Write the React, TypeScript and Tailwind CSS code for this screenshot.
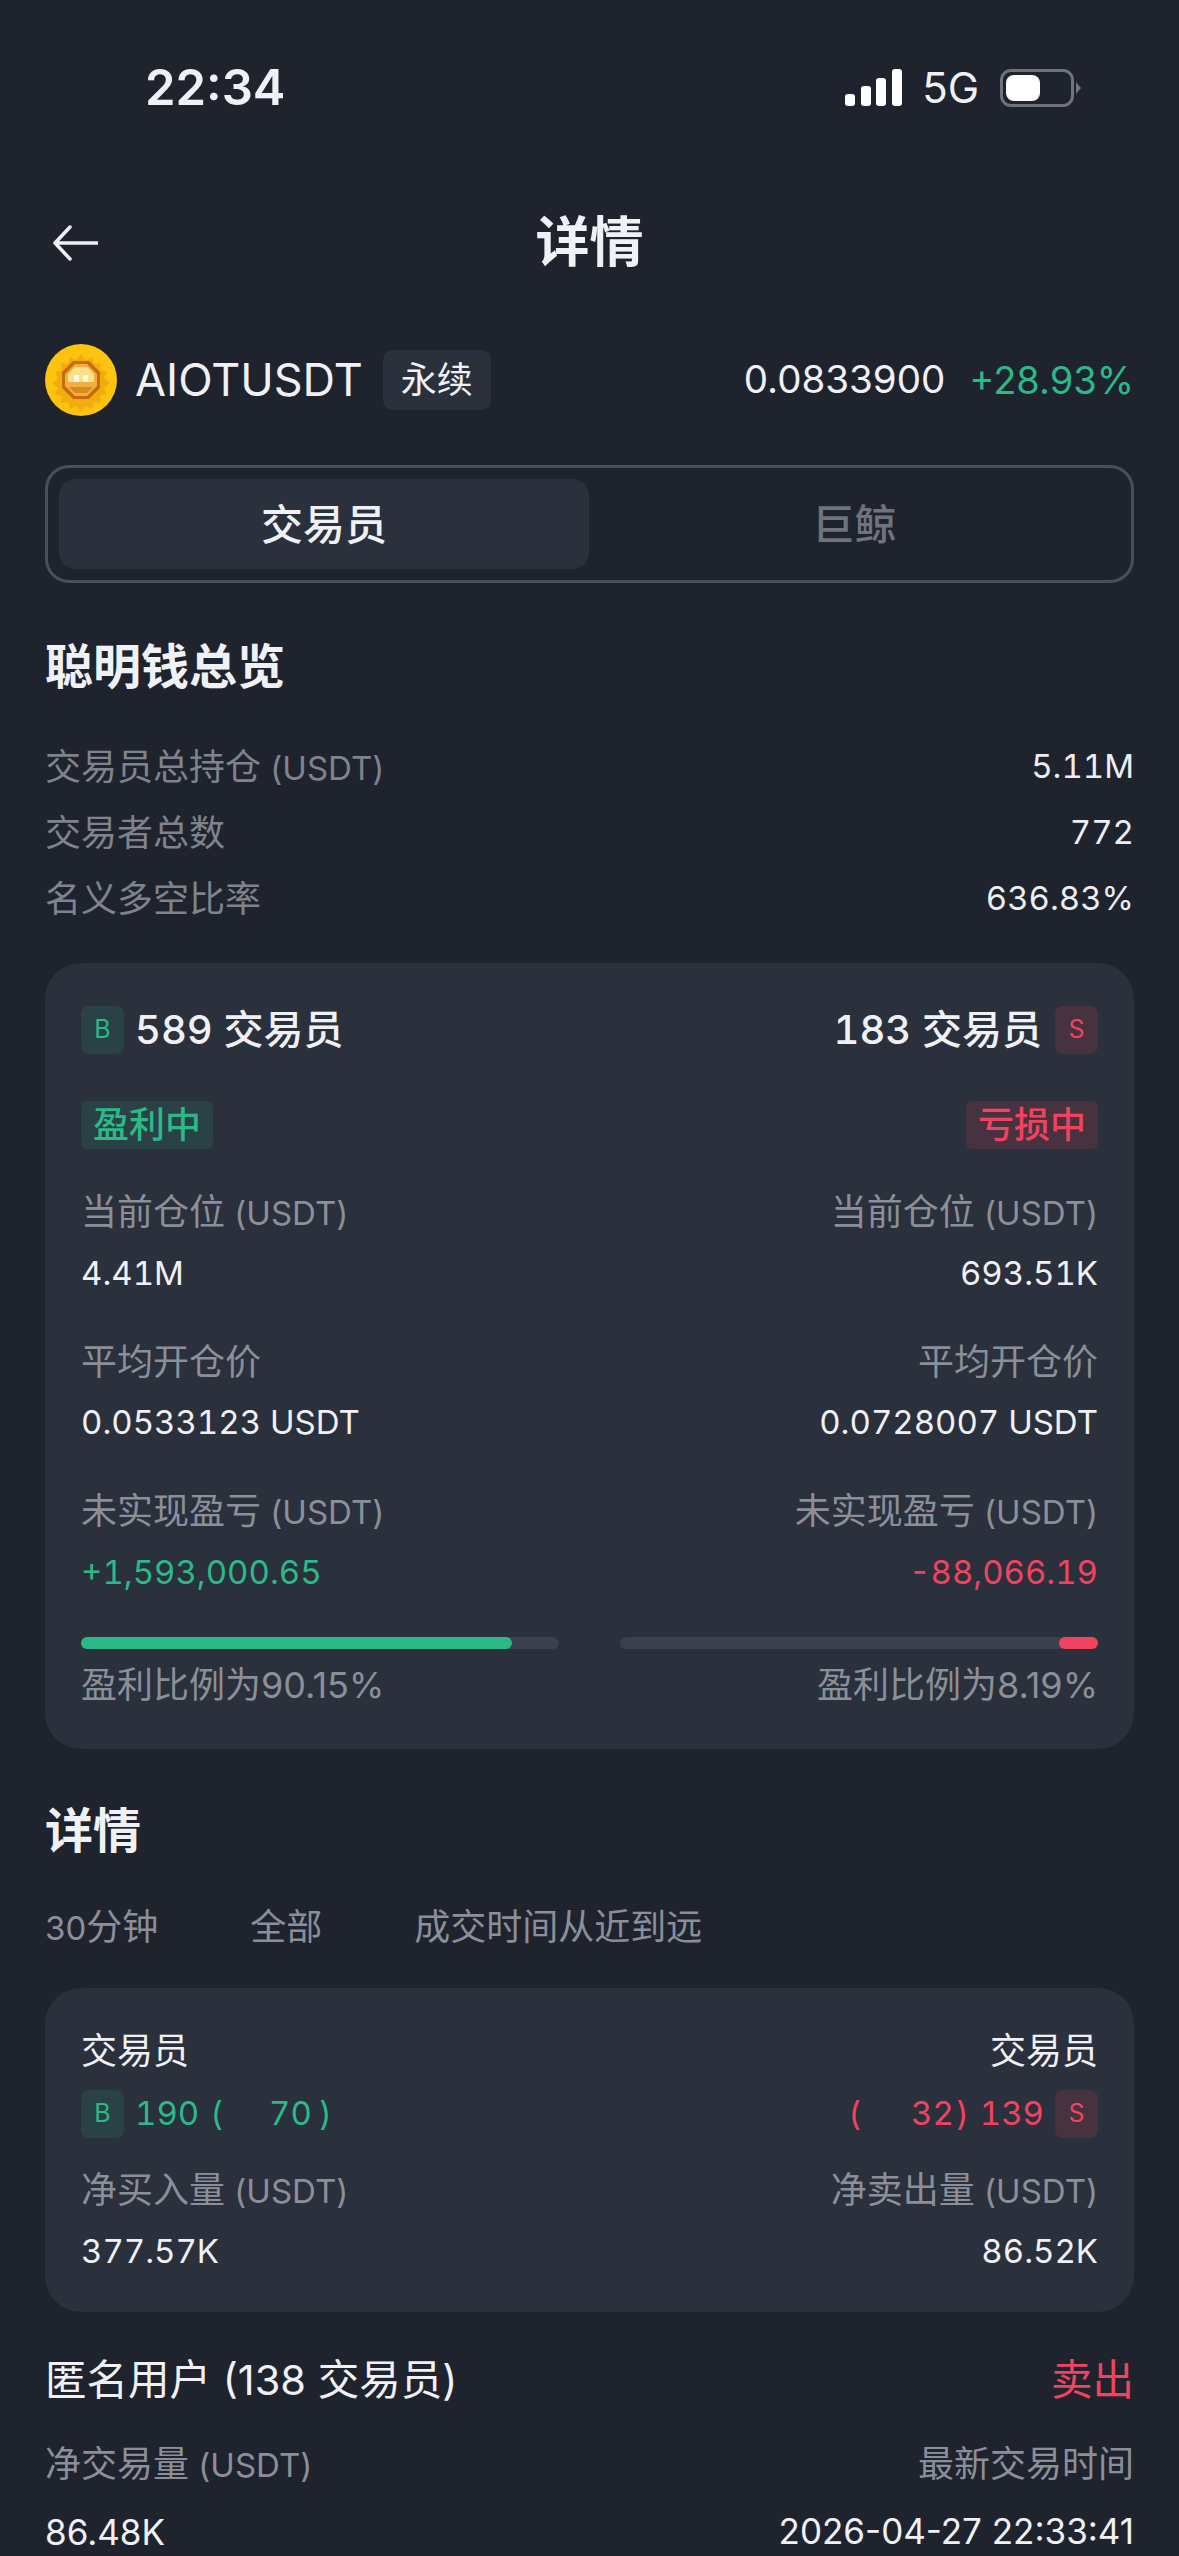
import type { ReactNode } from 'react';

const FONT = 'font-["Inter","Noto_Sans_CJK_SC",sans-serif]';

const CoinLogo = () => (
  <svg width="72" height="72" viewBox="0 0 72 72">
    <circle cx="36" cy="36" r="36" fill="#fdc30f" />
    <path d="M36 10l5 6 6-3 2 7 7-1-1 7 7 2-3 6 6 5-6 5 3 6-7 2 1 7-7-1-2 7-6-3-5 6-5-6-6 3-2-7-7 1 1-7-7-2 3-6-6-5 6-5-3-6 7-2-1-7 7 1 2-7 6 3z" fill="#e39a12" opacity="0.55" />
    <path d="M28 17h16l11 11v16L44 55H28L17 44V28z" fill="#c76a10" />
    <path d="M30 20h12l10 10v12L42 52H30L20 42V30z" fill="#f0b040" />
    <path d="M30 23h12l7 7v8H23v-8z" fill="#fbe08c" />
    <rect x="29" y="31" width="5" height="7" fill="#fff8e0" />
    <rect x="38" y="31" width="5" height="7" fill="#fff8e0" />
    <path d="M24 43h24l-6 6H30z" fill="#d98a1e" />
  </svg>
);

const SideBadge = ({ side }: { side: 'B' | 'S' }) => (
  <span
    className={`flex h-[48px] w-[43px] shrink-0 items-center justify-center rounded-[8px] text-[25px] ${
      side === 'B' ? 'bg-[#2a4145] text-[#2bb988]' : 'bg-[#47323f] text-[#f0435f]'
    }`}
  >
    {side}
  </span>
);

const Usdt = () => <span className="text-[33px]"> (USDT)</span>;

const Stat = ({ label, value, tone, valueClass }: { label: ReactNode; value: string; tone?: string; valueClass?: string }) => (
  <div className="flex flex-col">
    <span className="text-[36px] leading-[48px] text-[#8b8f99]">{label}</span>
    <span className={`${valueClass ?? 'mt-[12px] text-[33px] tabular-nums'} leading-[48px] ${tone ?? 'text-[#f0f1f5]'}`}>{value}</span>
  </div>
);

const OverviewRow = ({ label, value }: { label: ReactNode; value: string }) => (
  <div className="flex h-[66px] items-center justify-between">
    <span className="text-[36px] text-[#7f838d]">{label}</span>
    <span className="text-[33px] tabular-nums text-[#eceef2]">{value}</span>
  </div>
);

export default function App() {
  return (
    <div className={`h-[2556px] w-[1179px] overflow-hidden bg-[#1e232e] ${FONT} text-[#f0f1f5]`}>
      {/* status bar */}
      <div className="flex h-[176px] items-center justify-between pb-[1px] pl-[145px] pr-[98px]">
        <span className="text-[49px] font-semibold">22:34</span>
        <div className="flex items-center">
          <svg width="59" height="38" viewBox="0 0 59 38" fill="#fff">
            <rect x="1" y="25" width="10" height="12" rx="3" />
            <rect x="17" y="17" width="10" height="20" rx="3" />
            <rect x="32" y="9" width="10" height="28" rx="3" />
            <rect x="48" y="0" width="10" height="37" rx="3" />
          </svg>
          <span className="ml-[19px] text-[42px] leading-none">5G</span>
          <div className="ml-[21px] flex h-[38px] w-[74px] items-center rounded-[11px] border-[3px] border-[#6f737c] p-[3px]">
            <div className="h-[26px] w-[34px] rounded-[8px] bg-white" />
          </div>
          <svg className="ml-[2px]" width="5" height="12" viewBox="0 0 5 12" fill="#6f737c">
            <path d="M0 0l5 6-5 6z" />
          </svg>
        </div>
      </div>

      {/* nav */}
      <div className="relative flex h-[132px] items-center justify-center">
        <svg className="absolute left-[52px] top-[49px]" width="46" height="36" viewBox="0 0 46 36" fill="none" stroke="#f0f1f5" strokeWidth="3.5" strokeLinecap="round" strokeLinejoin="round">
          <path d="M45 18H3M18 2L3 18l15 16" />
        </svg>
        <span className="text-[54px] font-semibold">详情</span>
      </div>

      <div className="px-[45px]">
        {/* symbol row */}
        <div className="mt-[36px] flex h-[72px] items-center">
          <CoinLogo />
          <span className="ml-[18px] text-[45px]">AIOTUSDT</span>
          <span className="ml-[20px] flex h-[60px] w-[108px] items-center justify-center rounded-[10px] bg-[#2a303c] text-[36px]">永续</span>
          <span className="ml-auto text-[38.5px]">0.0833900</span>
          <span className="ml-[24px] text-[38px] text-[#2bb988]">+28.93%</span>
        </div>

        {/* tabs */}
        <div className="mt-[49px] flex h-[118px] rounded-[24px] border-[3px] border-[#4a4f5a] p-[11px]">
          <div className="flex w-[530px] items-center justify-center rounded-[16px] bg-[#2a303c] text-[42px] font-medium">交易员</div>
          <div className="flex flex-1 items-center justify-center text-[42px] font-medium text-[#6f737c]">巨鲸</div>
        </div>

        {/* overview */}
        <h2 className="mt-[56px] text-[48px] font-semibold leading-[56px]">聪明钱总览</h2>
        <div className="mt-[39px]">
          <OverviewRow label={<>交易员总持仓<Usdt /></>} value="5.11M" />
          <OverviewRow label="交易者总数" value="772" />
          <OverviewRow label="名义多空比率" value="636.83%" />
        </div>

        <div className="mt-[31px] h-[786px] rounded-[36px] bg-[#2a303c] px-[36px] pt-[37px]">
          <div className="flex items-center justify-between">
            <div className="flex items-center gap-[11px]">
              <SideBadge side="B" />
              <span className="text-[40px] font-medium tabular-nums">589 交易员</span>
            </div>
            <div className="flex items-center gap-[13px]">
              <span className="text-[40px] font-medium tabular-nums">183 交易员</span>
              <SideBadge side="S" />
            </div>
          </div>
          <div className="mt-[41px] flex justify-between">
            <span className="flex h-[48px] w-[132px] items-center justify-center rounded-[6px] bg-[#2a4145] text-[36px] font-medium text-[#2bb988]">盈利中</span>
            <span className="flex h-[48px] w-[132px] items-center justify-center rounded-[6px] bg-[#47323f] text-[36px] font-medium text-[#f0435f]">亏损中</span>
          </div>
          <div className="mt-[39px] flex justify-between">
            <Stat label={<>当前仓位<Usdt /></>} value="4.41M" />
            <div className="text-right"><Stat label={<>当前仓位<Usdt /></>} value="693.51K" /></div>
          </div>
          <div className="mt-[41px] flex justify-between">
            <Stat label="平均开仓价" value="0.0533123 USDT" />
            <div className="text-right"><Stat label="平均开仓价" value="0.0728007 USDT" /></div>
          </div>
          <div className="mt-[41px] flex justify-between">
            <Stat label={<>未实现盈亏<Usdt /></>} value="+1,593,000.65" tone="text-[#2bb988]" />
            <div className="text-right"><Stat label={<>未实现盈亏<Usdt /></>} value="-88,066.19" tone="text-[#f0435f]" /></div>
          </div>
          <div className="mt-[41px] flex justify-between">
            <div className="h-[12px] w-[478px] rounded-full bg-[#3a404c]">
              <div className="h-full w-[431px] rounded-full bg-[#2bb988]" />
            </div>
            <div className="flex h-[12px] w-[478px] justify-end rounded-full bg-[#3a404c]">
              <div className="h-full w-[39px] rounded-full bg-[#f0435f]" />
            </div>
          </div>
          <div className="mt-[12px] flex justify-between text-[36px] leading-[48px] text-[#8b8f99]">
            <span>盈利比例为90.15%</span>
            <span>盈利比例为8.19%</span>
          </div>
        </div>

        {/* details */}
        <h2 className="mt-[54px] text-[48px] font-semibold leading-[56px]">详情</h2>
        <div className="mt-[44px] flex gap-[92px] text-[36px] leading-[48px] text-[#8b8f99]">
          <span><span className="text-[33px]">30</span>分钟</span>
          <span>全部</span>
          <span>成交时间从近到远</span>
        </div>

        <div className="mt-[36px] h-[324px] rounded-[36px] bg-[#2a303c] px-[36px] pt-[40px]">
          <div className="flex justify-between text-[36px] leading-[46px]">
            <span>交易员</span>
            <span>交易员</span>
          </div>
          <div className="mt-[15px] flex justify-between text-[33px]">
            <div className="flex items-center gap-[11px] tabular-nums text-[#2bb988]">
              <SideBadge side="B" />
              <span>190</span>
              <span>(</span>
              <span className="ml-[35px]">70</span>
              <span className="-ml-[4px]">)</span>
            </div>
            <div className="flex items-center gap-[11px] tabular-nums text-[#f0435f]">
              <span>(</span>
              <span className="ml-[39px]">32</span>
              <span className="-ml-[9px]">)</span>
              <span>139</span>
              <SideBadge side="S" />
            </div>
          </div>
          <div className="mt-[27px] flex justify-between">
            <Stat label={<>净买入量<Usdt /></>} value="377.57K" />
            <div className="text-right"><Stat label={<>净卖出量<Usdt /></>} value="86.52K" /></div>
          </div>
        </div>

        {/* anonymous row */}
        <div className="mt-[40px] flex items-center justify-between text-[41.5px] leading-[56px]">
          <span>匿名用户 (138 交易员)</span>
          <span className="text-[#f0435f]">卖出</span>
        </div>
        <div className="mt-[32px] flex justify-between">
          <Stat label={<>净交易量<Usdt /></>} value="86.48K" valueClass="mt-[19px] text-[35px]" />
          <div className="text-right"><Stat label="最新交易时间" value="2026-04-27 22:33:41" valueClass="mt-[19px] text-[35px]" /></div>
        </div>
      </div>
    </div>
  );
}
